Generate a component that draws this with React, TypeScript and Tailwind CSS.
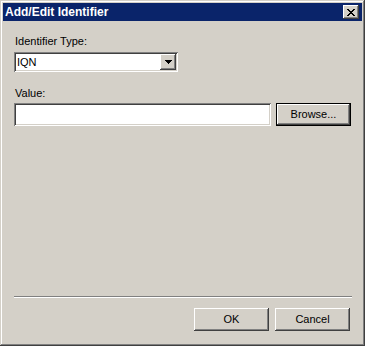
const raised =
  "shadow-[inset_-1px_-1px_#404040,inset_1px_1px_#ffffff,inset_-2px_-2px_#808080,inset_2px_2px_#d4d0c8]";
const sunken =
  "shadow-[inset_1px_1px_#808080,inset_-1px_-1px_#ffffff,inset_2px_2px_#404040,inset_-2px_-2px_#d4d0c8]";

function CloseGlyph() {
  return (
    <svg width="8" height="7" viewBox="0 0 8 7" shapeRendering="crispEdges">
      <path
        d="M0 0h2v1H0zM6 0h2v1H6zM1 1h2v1H1zM5 1h2v1H5zM2 2h4v1H2zM3 3h2v1H3zM2 4h4v1H2zM1 5h2v1H1zM5 5h2v1H5zM0 6h2v1H0zM6 6h2v1H6z"
        fill="#000"
      />
    </svg>
  );
}

function Button({ label, isDefault }: { label: string; isDefault?: boolean }) {
  if (isDefault) {
    return (
      <div className="w-[75px] h-[23px] border border-black">
        <div className="w-full h-full bg-[#d4d0c8] flex items-center justify-center shadow-[inset_-1px_-1px_#404040,inset_1px_1px_#ffffff,inset_-2px_-2px_#808080]">
          {label}
        </div>
      </div>
    );
  }
  return (
    <div className={`w-[75px] h-[23px] bg-[#d4d0c8] flex items-center justify-center ${raised}`}>
      {label}
    </div>
  );
}

export default function App() {
  return (
    <div
      className="w-[365px] h-[346px] bg-[#d4d0c8] p-[3px] flex flex-col text-[11px] leading-[13px] text-black shadow-[inset_-1px_-1px_#404040,inset_1px_1px_#d4d0c8,inset_-2px_-2px_#808080,inset_2px_2px_#ffffff]"
      style={{ fontFamily: '"Liberation Sans", Arial, sans-serif' }}
    >
      <div className="h-[18px] bg-[#0a246a] flex items-center justify-between pl-[2px] pr-[3px]">
        <span className="text-white font-bold text-[12px]">Add/Edit Identifier</span>
        <div className={`w-[16px] h-[14px] bg-[#d4d0c8] flex items-center justify-center ${raised}`}>
          <CloseGlyph />
        </div>
      </div>

      <div className="flex-1 flex flex-col px-[11px]">
        <div className="mt-[14px] ml-[1px]">Identifier Type:</div>
        <div className={`mt-[4px] w-[164px] h-[20px] bg-white p-[2px] flex items-center ${sunken}`}>
          <span className="flex-1 pl-[1px]">IQN</span>
          <div className={`w-[16px] h-[16px] bg-[#d4d0c8] flex items-center justify-center ${raised}`}>
            <svg width="7" height="4" viewBox="0 0 7 4" shapeRendering="crispEdges">
              <path d="M0 0h7v1H0zM1 1h5v1H1zM2 2h3v1H2zM3 3h1v1H3z" fill="#000" />
            </svg>
          </div>
        </div>

        <div className="mt-[15px] ml-[1px]">Value:</div>
        <div className="mt-[3px] flex gap-[5px]">
          <div className={`w-[257px] h-[23px] bg-white ${sunken}`} />
          <Button label="Browse..." isDefault />
        </div>

        <div className="flex-1" />

        <div className="h-[2px] w-[338px] border-t border-[#808080] border-b border-b-white" />
        <div className="mt-[10px] mb-[12px] flex justify-end gap-[6px] pr-[1px]">
          <Button label="OK" />
          <Button label="Cancel" />
        </div>
      </div>
    </div>
  );
}
